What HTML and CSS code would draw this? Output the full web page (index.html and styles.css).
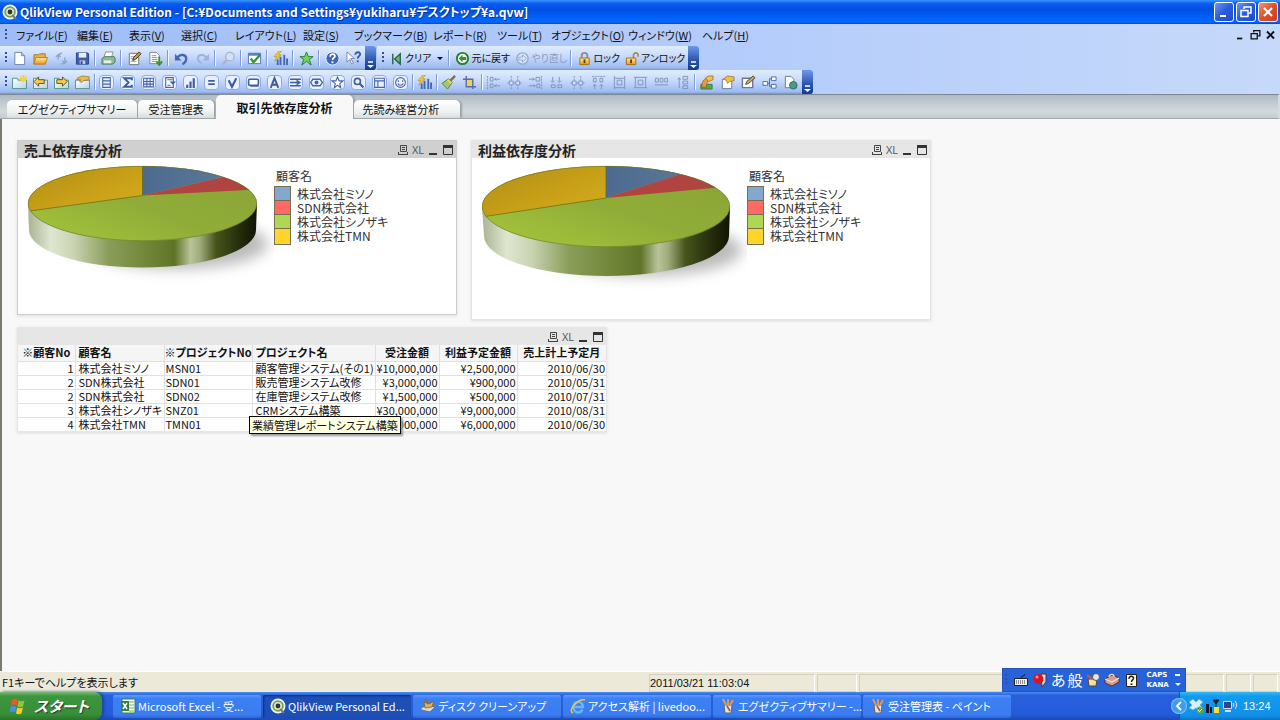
FILE: index.html
```
<!DOCTYPE html>
<html lang="ja">
<head>
  <meta charset="UTF-8">
  <title>QlikView Personal Edition</title>
  <link rel="stylesheet" href="styles.css">
</head>
<body>

<!-- icon set -->
<svg class="defs" width="0" height="0" aria-hidden="true">
  <defs>
    <linearGradient id="gFolder" x2="0" y2="1"><stop offset="0" stop-color="#ffe9a0"/><stop offset="1" stop-color="#e89a1c"/></linearGradient>
    <linearGradient id="gSheet" x2="1" y2="1"><stop offset="0" stop-color="#fff"/><stop offset="1" stop-color="#b5d3e6"/></linearGradient>
    <linearGradient id="gYellow" x2="1" y2="1"><stop offset="0" stop-color="#a88714"/><stop offset=".6" stop-color="#c8a018"/><stop offset="1" stop-color="#d8ae1c"/></linearGradient>
    <linearGradient id="gGreen" x1="0" y1="1" x2="1" y2="0"><stop offset="0" stop-color="#aace3c"/><stop offset=".5" stop-color="#90ac38"/><stop offset="1" stop-color="#88a234"/></linearGradient>
    <linearGradient id="gBlue" x2="1"><stop offset="0" stop-color="#4d6b90"/><stop offset="1" stop-color="#607c9c"/></linearGradient>
    <linearGradient id="gSide">
      <stop offset="0" stop-color="#a9b391"/><stop offset=".1" stop-color="#dfe6d0"/><stop offset=".2" stop-color="#c9d3b2"/>
      <stop offset=".35" stop-color="#8a9e5a"/><stop offset=".5" stop-color="#74893c"/><stop offset=".64" stop-color="#5f7428"/>
      <stop offset=".71" stop-color="#b9c49a"/><stop offset=".75" stop-color="#a0ac7c"/><stop offset=".82" stop-color="#47551c"/><stop offset=".92" stop-color="#262f0b"/><stop offset="1" stop-color="#101403"/>
    </linearGradient>
    <filter id="soft" x="-30%" y="-50%" width="160%" height="200%"><feGaussianBlur stdDeviation="7"/></filter>
  </defs>
  <symbol id="qlik" viewBox="0 0 16 16"><circle cx="8" cy="8" r="7.5" fill="#f4f6ee"/><circle cx="8" cy="8" r="5.8" fill="#72a153"/><circle cx="8" cy="8" r="4" fill="#dbe8ce"/><circle cx="8" cy="8" r="2.4" fill="#333"/><path d="M10 11l4 4" stroke="#777" stroke-width="2"/></symbol>
  <symbol id="new" viewBox="0 0 16 16"><path d="M3 1.500h7l3.500 3.500v9.500H3z" fill="#fff" stroke="#6a83ad"/><path d="M10 1.500V5h3.500" fill="#c5d6ef" stroke="#6a83ad"/></symbol>
  <symbol id="open" viewBox="0 0 16 16"><path d="M1 14V4h5l1-1h6v4" fill="#e9b44c" stroke="#a8762a"/><path d="M3 7h12.500l-2.500 7H1z" fill="url(#gFolder)" stroke="#b27e20"/></symbol>
  <symbol id="reload" viewBox="0 0 16 16"><path d="M4.500 9V4M2 6.500L4.500 4 7 6.500M11.500 7v6M9 10.500l2.500 2.500 2.500-2.500M4.500 4l4-2M11.500 13l-4 1" fill="none" stroke="#8ea5cc" stroke-width="1.500"/></symbol>
  <symbol id="save" viewBox="0 0 16 16"><path d="M1.500 2h12l1 1v11h-13z" fill="#3f5fae" stroke="#28427f"/><path d="M4 2h8v5H4z" fill="#e8eefa"/><path d="M5 10h6v4H5z" fill="#bfcbe6"/><path d="M6 11h2v3H6z" fill="#28427f"/></symbol>
  <symbol id="print" viewBox="0 0 16 16"><path d="M5 1h8l-2 6H3z" fill="#fff" stroke="#7b9a8b"/><path d="M1 8l3-2h10l1 2v4l-3 2H1z" fill="#8fb89a" stroke="#4e7a66"/><path d="M3 10h8v3H3z" fill="#e5f1e5"/></symbol>
  <symbol id="edit" viewBox="0 0 16 16"><path d="M2.500 2.500h10v12h-10z" fill="#fff" stroke="#6d7481"/><path d="M4 6h5M4 8h6M4 11h6" stroke="#8b99b5"/><path d="M6 10l1-3 6-6 2 2-6 6z" fill="#d79c3c" stroke="#453014"/></symbol>
  <symbol id="script" viewBox="0 0 16 16"><path d="M2 1.500h7l3 3v9H2z" fill="#fff" stroke="#718197"/><path d="M4 5h5M4 7h6M4 9h6M4 11h5" stroke="#7d9a76"/><path d="M12 6v8m-3-3l3 4 3-4" fill="none" stroke="#3d9131" stroke-width="2"/></symbol>
  <symbol id="undo" viewBox="0 0 16 16"><path d="M3 8c4-6 10-4 10 0 0 3-2 5-4 6" fill="none" stroke="#4468b7" stroke-width="2.500"/><path d="M1 3v7h7z" fill="#4468b7"/></symbol>
  <symbol id="redo" viewBox="0 0 16 16"><path d="M13 8C9 2 3 4 3 8c0 3 2 4 4 5" fill="none" stroke="#9db2dc" stroke-width="2"/><path d="M15 3v7H8z" fill="#9db2dc"/></symbol>
  <symbol id="find" viewBox="0 0 16 16"><circle cx="9.500" cy="6" r="4.500" fill="#d5e2f6" stroke="#a6b5cf" stroke-width="1.500"/><path d="M6 9.500l-4 5" stroke="#aab4c9" stroke-width="2.500"/></symbol>
  <symbol id="check" viewBox="0 0 16 16"><path d="M1.500 2.500h13v11h-13z" fill="#fff" stroke="#5270ad"/><path d="M1.500 2h13v3h-13z" fill="#5b7ec4"/><path d="M4 8l3 4 7-8" fill="none" stroke="#2f9a2b" stroke-width="2.500"/></symbol>
  <symbol id="wizard" viewBox="0 0 16 16"><path d="M7 6h2v9H7zM11 4h2v11h-2zM4 9h2v6H4zM14 8h2v7h-2z" fill="#4668b4"/><path d="M6 0L1 6h3l-2 5 7-7H6l3-4z" fill="#f2c833" stroke="#9a7a22" stroke-width=".5"/></symbol>
  <symbol id="star" viewBox="0 0 16 16"><path d="M8 1l2 5h5l-4 3 2 6-5-4-5 4 2-6-4-3h5z" fill="#6cd65c" stroke="#2a7d2f"/></symbol>
  <symbol id="help" viewBox="0 0 16 16"><circle cx="8" cy="8" r="7" fill="#3e66bb" stroke="#eef3ff"/><path d="M5.500 6c0-4 6-3 5 0-.5 1.500-2.500 1.500-2.500 3.500" fill="none" stroke="#fff" stroke-width="1.800"/><path d="M7 11h2v2H7z" fill="#fff"/></symbol>
  <symbol id="what" viewBox="0 0 16 16"><path d="M1 1l8 7H5l3 5-2 1-2-5-3 3z" fill="#fff" stroke="#798aa8"/><path d="M10 4c0-4 6-3 5 0-.5 1.500-2.500 2-2.500 4" fill="none" stroke="#3459a8" stroke-width="2"/><path d="M11.500 10h2v2h-2z" fill="#3459a8"/></symbol>
  <symbol id="clear" viewBox="0 0 16 16"><path d="M4 3v11M12 3v11L6 8.500z" fill="#76b77c" stroke="#27644a" stroke-width="1.500"/></symbol>
  <symbol id="back" viewBox="0 0 16 16"><circle cx="8" cy="8" r="6" fill="#f5fff2" stroke="#287f34" stroke-width="2"/><path d="M12 6.500H8V4L4 8l4 4V9.500h4z" fill="#2c923b"/></symbol>
  <symbol id="forward" viewBox="0 0 16 16"><circle cx="8" cy="8" r="6" fill="#d9e6fa" stroke="#94abce" stroke-width="1.500"/><path d="M4 6.500h4V4l4 4-4 4V9.500H4z" fill="#d9e6fa" stroke="#94abce"/></symbol>
  <symbol id="lock" viewBox="0 0 16 16"><path d="M5 8V5c0-4 6-4 6 0v3" fill="none" stroke="#8d8f96" stroke-width="2"/><path d="M3 7.500h10v7H3z" fill="url(#gFolder)" stroke="#a66d14"/><path d="M7 9h2v4H7z" fill="#5e4312"/></symbol>
  <symbol id="unlock" viewBox="0 0 16 16"><path d="M9 8V5c0-4 5-4 5 0v1" fill="none" stroke="#a98a54" stroke-width="1.800"/><path d="M1.500 7.500h10v7h-10z" fill="url(#gFolder)" stroke="#a66d14"/><path d="M5.500 9h2v4h-2z" fill="#5e4312"/></symbol>
  <symbol id="tabnew" viewBox="0 0 16 16"><path d="M.5 3.500h5l1 2h9v9H.5z" fill="url(#gSheet)" stroke="#4f9185"/><path d="M12 0v8M8 4h8M9 1l6 6M15 1L9 7" stroke="#f2d346" stroke-width="1.500"/></symbol>
  <symbol id="tableft" viewBox="0 0 16 16"><path d="M.5 3.500h5l1 2h9v9H.5z" fill="url(#gSheet)" stroke="#4f9185"/><path d="M1 7l5-5v3h6v4H6v3z" fill="#f7cc48" stroke="#684d18"/></symbol>
  <symbol id="tabright" viewBox="0 0 16 16"><path d="M.5 3.500h5l1 2h9v9H.5z" fill="url(#gSheet)" stroke="#4f9185"/><path d="M14 7L9 2v3H3v4h6v3z" fill="#f7cc48" stroke="#684d18"/></symbol>
  <symbol id="tabprop" viewBox="0 0 16 16"><path d="M.5 5.500h15v9H.5z" fill="url(#gSheet)" stroke="#4f9185"/><path d="M3 3l5-2 7 1v3l-6 1-2 2-2-1 1-2H2z" fill="#efbd45" stroke="#8a6628" stroke-width=".7"/></symbol>
  <!-- sheet object glyphs, drawn inside a rounded frame -->
  <symbol id="olist" viewBox="2 2 12 12"><path d="M4.500 3.500h7v9h-7zM4.500 6.500h7M4.500 9.500h7" fill="none" stroke="#4664ad"/></symbol>
  <symbol id="osum" viewBox="2 2 12 12"><path d="M12 6V4H5l4 4-4 4h7v-2" fill="none" stroke="#3f5ca6" stroke-width="1.800"/></symbol>
  <symbol id="ogrid" viewBox="2 2 12 12"><path d="M3.500 4h9v8h-9zM3.500 7h9M3.500 9.500h9M6.500 4v8M9.500 4v8" fill="none" stroke="#4664ad"/></symbol>
  <symbol id="omulti" viewBox="2 2 12 12"><path d="M4.500 3.500h7v9h-7z" fill="#fff" stroke="#4664ad"/><path d="M6 5.500h5M6 10.500h3" stroke="#4664ad"/><path d="M8 7h6l-3 3z" fill="#3f5ca6"/></symbol>
  <symbol id="obar" viewBox="2 2 12 12"><path d="M4 10h2v3H4zM7 7h2v6H7zM10 4h2v9h-2z" fill="#3f5ca6"/></symbol>
  <symbol id="oinput" viewBox="2 2 12 12"><path d="M5 6.500h6M5 9.500h6" stroke="#3f5ca6" stroke-width="1.500"/></symbol>
  <symbol id="ocheck" viewBox="2 2 12 12"><path d="M4.500 6l3 6 4-8" fill="none" stroke="#3f5ca6" stroke-width="2"/></symbol>
  <symbol id="obtn" viewBox="2 2 12 12"><rect x="3.500" y="5" width="9" height="5.500" rx="1" fill="#fff" stroke="#3f5ca6" stroke-width="1.500"/><path d="M5 11.500h8" stroke="#3f5ca6"/></symbol>
  <symbol id="otext" viewBox="2 2 12 12"><path d="M4.500 13L8 4l3.500 9M5.500 10h5" fill="none" stroke="#3f5ca6" stroke-width="1.800"/></symbol>
  <symbol id="oline" viewBox="2 2 12 12"><path d="M3 5h10M3 8h8M3 11h10M9 6l3 2-3 2" fill="none" stroke="#3f5ca6" stroke-width="1.300"/></symbol>
  <symbol id="oslide" viewBox="2 2 12 12"><path d="M5 4.500L2.500 8 5 11.500M11 4.500L13.500 8 11 11.500M5 5h6M5 11h6" fill="none" stroke="#4664ad" stroke-width="1.200"/><circle cx="8" cy="8" r="1.800" fill="#4664ad"/></symbol>
  <symbol id="ostar" viewBox="2 2 12 12"><path d="M8 3l1.500 3.500H13l-3 2.500 1 4-3-2.500L5 13l1-4-3-2.500h3.500z" fill="#fff" stroke="#4664ad"/></symbol>
  <symbol id="osearch" viewBox="2 2 12 12"><circle cx="7" cy="7" r="2.800" fill="none" stroke="#3f5ca6" stroke-width="1.500"/><path d="M9 9l3.500 3.500" stroke="#3f5ca6" stroke-width="2"/></symbol>
  <symbol id="obox" viewBox="2 2 12 12"><path d="M3.500 4h9v8.500h-9zM3.500 6.500h9M6.500 6.500V12" fill="none" stroke="#4664ad"/></symbol>
  <symbol id="osmile" viewBox="2 2 12 12"><circle cx="8" cy="8" r="4.500" fill="none" stroke="#4664ad"/><path d="M6 6v1.500M10 6v1.500M5.500 9c1 2 4 2 5 0" fill="none" stroke="#4664ad"/></symbol>
  <symbol id="brush" viewBox="0 0 16 16"><path d="M15 1l-5 5" stroke="#8b6b3c" stroke-width="2.500"/><path d="M8 4l4 4-5 7-6-6z" fill="#a2c86a" stroke="#55803a"/><path d="M7 5l4 4" stroke="#f0d267" stroke-width="2"/></symbol>
  <symbol id="snap" viewBox="0 0 16 16"><path d="M5 5h6v6H5z" fill="#f2d058"/><path d="M4.500 1v11.500H15M1 4.500h10.500V15" fill="none" stroke="#566fa8" stroke-width="1.500"/></symbol>
  <symbol id="al1" viewBox="0 0 16 16"><path d="M1.500 1v14" stroke="#7f92bb" stroke-dasharray="2 1"/><path d="M4.500 2.500h3v4h-3zM4.500 9.500h3v4h-3zM9 4.500h6M9 11.500h6M11 3L9.500 4.500 11 6M11 10l-1.500 1.500L11 13" fill="none" stroke="#7f92bb"/></symbol>
  <symbol id="al2" viewBox="0 0 16 16"><path d="M4.500 1v14M11.500 1v14" stroke="#7f92bb" stroke-dasharray="2 1"/><path d="M2.500 6.500h4v4h-4zM9.500 6.500h4v4h-4z" fill="#d6e3fb" stroke="#7f92bb"/><path d="M.5 8.500h2M13.500 8.500h2M6.500 8.500h3" stroke="#7f92bb"/></symbol>
  <symbol id="al3" viewBox="0 0 16 16"><path d="M14.500 1v14" stroke="#7f92bb" stroke-dasharray="2 1"/><path d="M8.500 2.500h4v4h-4zM9.500 9.500h3v4h-3zM1 4.500h6M1 11.500h7M5 3l1.500 1.500L5 6M6 10l1.500 1.500L6 13" fill="none" stroke="#7f92bb"/></symbol>
  <symbol id="al4" viewBox="0 0 16 16"><path d="M4 2v5M11 2v5M2 6l2 2 2-2M9 6l2 2 2-2M2.500 10.500h4v3h-4zM9.500 10.500h4v3h-4z" fill="none" stroke="#7f92bb"/></symbol>
  <symbol id="al5" viewBox="0 0 16 16"><path d="M1 1.500h14" stroke="#7f92bb" stroke-dasharray="2 1"/><path d="M2.500 3.500h3v4h-3zM9.500 3.500h3v4h-3zM4 10v5M11 10v5M2 12l2-2 2 2M9 12l2-2 2 2" fill="none" stroke="#7f92bb"/></symbol>
  <symbol id="al6" viewBox="0 0 16 16"><path d="M5.500 5.500h5v5h-5zM2.500 1v14M13.500 1v14M3 3.500h10M3 13.500h10" fill="none" stroke="#7f92bb"/></symbol>
  <symbol id="al7" viewBox="0 0 16 16"><path d="M5.500 5.500h5v5h-5zM1 2.500h14M1 13.500h14M2.500 3v10M13.500 3v10" fill="none" stroke="#7f92bb"/></symbol>
  <symbol id="al8" viewBox="0 0 16 16"><path d="M1.500 3.500h3v4h-3zM6.500 3.500h3v4h-3zM11.500 3.500h3v4h-3zM1 10.500h14" fill="none" stroke="#7f92bb"/></symbol>
  <symbol id="al9" viewBox="0 0 16 16"><path d="M8.500 1.500h5v3h-5zM8.500 6.500h5v3h-5zM8.500 11.500h5v3h-5zM4.500 3v11M3 5l1.500-2L6 5" fill="none" stroke="#7f92bb"/></symbol>
  <symbol id="oval" viewBox="0 0 16 16"><path d="M2 10h12v5H2z" fill="#57a452" stroke="#3e7e3c"/><path d="M3 13c0-6 2-9 5-9l2 3c-2 1-2 3-2 6z" fill="#e89b3c" stroke="#8a5a22" stroke-width=".7"/><path d="M7 3l3-2h5v4l-5 2z" fill="#f4c24c" stroke="#8a6020" stroke-width=".7"/></symbol>
  <symbol id="props" viewBox="0 0 16 16"><path d="M2.500 4.500h10v10h-10z" fill="#fff" stroke="#68799d"/><path d="M4 4l4-3 7 1v4l-5 1-2 2-1-3z" fill="#efbd45" stroke="#8a6628" stroke-width=".7"/></symbol>
  <symbol id="note" viewBox="0 0 16 16"><path d="M1.500 3.500h11v10h-11z" fill="#fff" stroke="#68799d" stroke-width="1.500"/><path d="M5 10l1-3 7-6 2 2-7 6z" fill="#cfa95a" stroke="#4d4432"/></symbol>
  <symbol id="tree" viewBox="0 0 16 16"><path d="M1 7h5v4H1zM10 2h5v4h-5zM10 10h5v4h-5z" fill="#fff" stroke="#4c69ae"/><path d="M6 9h2V4h2M8 9v3h2" fill="none" stroke="#4c69ae"/></symbol>
  <symbol id="web" viewBox="0 0 16 16"><path d="M2.500 1.500h6l3 3v9h-9z" fill="#fff" stroke="#68799d"/><circle cx="11" cy="11" r="4" fill="#4a9a86" stroke="#2d6a66"/></symbol>
  <symbol id="more" viewBox="0 0 11 24"><path d="M3 16h5" stroke="#fff" stroke-width="1.500"/><path d="M2 19h7l-3.500 3z" fill="#fff"/></symbol>
  <symbol id="cprint" viewBox="0 0 12 12"><path d="M3.500 1.500h6v6h-6zM1.500 10.500h9M1.500 8v3M10.500 8v3M5 3.500h3M5 5.500h3" fill="none" stroke="#444"/></symbol>
  <symbol id="cmin" viewBox="0 0 12 12"><path d="M2 9h8v2H2z" fill="#333"/></symbol>
  <symbol id="cmax" viewBox="0 0 12 12"><path d="M1.500 2v8.500h9V2" fill="none" stroke="#333"/><path d="M1 1h10v3H1z" fill="#333"/></symbol>
  <symbol id="rest" viewBox="0 0 16 16"><path d="M6 5V3h7v6h-2M3 6.500h7v6H3z" fill="none" stroke="currentColor" stroke-width="1.500"/></symbol>
  <symbol id="close" viewBox="0 0 16 16"><path d="M4 4l8 8M12 4l-8 8" stroke="currentColor" stroke-width="2.200"/></symbol>
  <symbol id="min" viewBox="0 0 16 16"><path d="M4 11h6v2H4z" fill="currentColor"/></symbol>
  <symbol id="flag" viewBox="0 0 18 18"><path d="M3 3c2-2 4-1 5.500 0L7.500 8.500C6 7.500 4 7 2 8.500z" fill="#f0562b"/><path d="M9.500 3.500c2 1 4 1 6 0l-1.500 6c-2 1-4 1-5.500 0z" fill="#8cc63e"/><path d="M1.800 10c2-1.500 4-1 5.500 0L6 15.500C4.500 14.500 2.500 14 .5 15.500z" fill="#4a8df5"/><path d="M8.200 10.500c2 1 4 1 5.800 0l-1.500 6c-2 1-4 1-5.500 0z" fill="#fbc928"/></symbol>
  <symbol id="excel" viewBox="0 0 16 16"><path d="M2 1h13v14H2z" fill="#fff" stroke="#3c7f3e"/><path d="M9 4h5M9 7h5M9 10h5M9 13h5" stroke="#6fa969"/><path d="M1 3h8v10H1z" fill="#2f8338"/><path d="M3 5l4 6M7 5l-4 6" stroke="#fff" stroke-width="1.500"/></symbol>
  <symbol id="disk" viewBox="0 0 16 16"><path d="M1 10l6-3 8 2-5 5-9-2z" fill="#d5d8d8" stroke="#72706c"/><path d="M4 4l5 2 5-3-2 6-7 1z" fill="#dfae56" stroke="#815a20" stroke-width=".7"/><path d="M8 5L5 1" stroke="#a6642b" stroke-width="2"/></symbol>
  <symbol id="ie" viewBox="0 0 16 16"><path d="M12.500 11.500c-3 5-9 3-9-2.500 0-7 9.500-6.500 9.500 0H4" fill="none" stroke="#67b8f8" stroke-width="2.500"/><path d="M3 15C-3 13 8 0 15 2" fill="none" stroke="#f2c83e" stroke-width="1.500"/></symbol>
  <symbol id="paint" viewBox="0 0 16 16"><path d="M4 7h8l-1 8H5z" fill="#dfe5e8" stroke="#66676a"/><path d="M6 7L3 1M8 7V1M10 7l3-5" stroke="#dc9a5a" stroke-width="2"/><path d="M7 8l3 5" stroke="#b94a2c" stroke-width="1.500"/></symbol>
  <symbol id="kbd" viewBox="0 0 16 16"><path d="M1.500 6.500h13v7h-13z" fill="#eee" stroke="#222"/><path d="M3 9h10M3 11h10" stroke="#333" stroke-dasharray="1 1"/><path d="M8 6c0-3 4-1 4-4" fill="none" stroke="#222"/></symbol>
  <symbol id="ball" viewBox="0 0 16 16"><path d="M9 2h5v8l-4 5z" fill="#ddd" stroke="#433"/><circle cx="6.500" cy="7" r="5" fill="#d71425"/><circle cx="5" cy="5" r="1.500" fill="#ff8d8d"/></symbol>
  <symbol id="pad" viewBox="0 0 16 16"><path d="M3 7h9l-1 7H4z" fill="#f0dfa8" stroke="#5d4720"/><circle cx="11" cy="5" r="3.500" fill="#dde9ee" stroke="#555"/><path d="M2 3l5 4" stroke="#cc5b36" stroke-width="2"/></symbol>
  <symbol id="tool" viewBox="0 0 16 16"><path d="M1 7l7-4 7 3v4l-7 4-7-3z" fill="#d39c8b" stroke="#5a3028"/><path d="M1 7l7 3 7-4M5 5c0-4 6-3 5 0" fill="none" stroke="#f5ded5" stroke-width="1.300"/></symbol>
  <symbol id="ihelp" viewBox="0 0 16 16"><path d="M3.500 2.500h10v12h-10z" fill="#fff8dc" stroke="#222"/><path d="M6 7c0-4 5-3 4.500-.5C10 8 8.500 8 8.500 10" fill="none" stroke="#222" stroke-width="1.500"/><path d="M7.500 11.500h2v1.500h-2z" fill="#222"/></symbol>
  <symbol id="box" viewBox="0 0 16 16"><path d="M1 4l4-3 3 3 3-3 4 3-3 3 3 3-4 2-3-2-3 2-4-2 3-3z" fill="#d8effc" stroke="#5aaad6" stroke-width=".7"/><circle cx="12" cy="12" r="3.500" fill="#55b431"/><path d="M10 12l1.500 1.500L14 11" fill="none" stroke="#fff"/></symbol>
  <symbol id="signal" viewBox="0 0 16 16"><path d="M1 6h3v9H1zM5 9h2v6H5z" fill="#111a33"/><path d="M8 2h6l-3 4zM11 5v4" fill="#222" stroke="#222"/><path d="M9 9h5v6H9z" fill="#f3df38"/></symbol>
  <symbol id="net" viewBox="0 0 16 16"><path d="M1.500 3.500h8v7h-8z" fill="#2c4887" stroke="#cddcf4"/><path d="M3 13h6" stroke="#cddcf4" stroke-width="2"/><path d="M11 5c1 1 1 3 0 4M13 3c2 2 2 6 0 8" fill="none" stroke="#dff0ff"/></symbol>
</svg>

<header class="titlebar">
  <svg class="icon"><use href="#qlik"/></svg>
  <h1>QlikView Personal Edition - [C:¥Documents and Settings¥yukiharu¥デスクトップ¥a.qvw]</h1>
  <div class="winbtns">
    <button aria-label="最小化"><svg><use href="#min"/></svg></button>
    <button aria-label="元のサイズに戻す"><svg><use href="#rest"/></svg></button>
    <button class="x" aria-label="閉じる"><svg><use href="#close"/></svg></button>
  </div>
</header>

<div class="bars">
  <nav class="menubar">
    <span class="grip"></span>
    <div class="menus">
      <button>ファイル(<u>F</u>)</button>
      <button>編集(<u>E</u>)</button>
      <button>表示(<u>V</u>)</button>
      <button>選択(<u>C</u>)</button>
      <button>レイアウト(<u>L</u>)</button>
      <button>設定(<u>S</u>)</button>
      <button>ブックマーク(<u>B</u>)</button>
      <button>レポート(<u>R</u>)</button>
      <button>ツール(<u>T</u>)</button>
      <button>オブジェクト(<u>O</u>)</button>
      <button>ウィンドウ(<u>W</u>)</button>
      <button>ヘルプ(<u>H</u>)</button>
    </div>
    <div class="docbtns">
      <button aria-label="最小化"><svg><use href="#min"/></svg></button>
      <button aria-label="元に戻す"><svg><use href="#rest"/></svg></button>
      <button aria-label="閉じる"><svg><use href="#close"/></svg></button>
    </div>
  </nav>

  <div class="row">
    <div class="toolbar">
      <span class="grip"></span>
      <button aria-label="新規"><svg><use href="#new"/></svg></button>
      <button aria-label="開く"><svg><use href="#open"/></svg></button>
      <button aria-label="更新"><svg><use href="#reload"/></svg></button>
      <button aria-label="保存"><svg><use href="#save"/></svg></button>
      <i class="sep"></i>
      <button aria-label="印刷"><svg><use href="#print"/></svg></button>
      <i class="sep"></i>
      <button aria-label="スクリプト編集"><svg><use href="#edit"/></svg></button>
      <button aria-label="リロード"><svg><use href="#script"/></svg></button>
      <i class="sep"></i>
      <button aria-label="元に戻す"><svg><use href="#undo"/></svg></button>
      <button aria-label="やり直し"><svg><use href="#redo"/></svg></button>
      <i class="sep"></i>
      <button aria-label="検索"><svg><use href="#find"/></svg></button>
      <i class="sep"></i>
      <button aria-label="現在の選択"><svg><use href="#check"/></svg></button>
      <i class="sep"></i>
      <button aria-label="クイックチャート"><svg><use href="#wizard"/></svg></button>
      <i class="sep"></i>
      <button aria-label="ブックマーク"><svg><use href="#star"/></svg></button>
      <i class="sep"></i>
      <button aria-label="ヘルプ"><svg><use href="#help"/></svg></button>
      <button aria-label="ポップヒント"><svg><use href="#what"/></svg></button>
      <svg class="more"><use href="#more"/></svg>
    </div>
    <div class="toolbar">
      <span class="grip"></span>
      <button class="txt"><svg><use href="#clear"/></svg>クリア<span class="arrow"></span></button>
      <i class="sep"></i>
      <button class="txt"><svg><use href="#back"/></svg>元に戻す</button>
      <button class="txt off"><svg><use href="#forward"/></svg>やり直し</button>
      <i class="sep"></i>
      <button class="txt"><svg><use href="#lock"/></svg>ロック</button>
      <button class="txt"><svg><use href="#unlock"/></svg>アンロック</button>
      <svg class="more"><use href="#more"/></svg>
    </div>
  </div>

  <div class="row">
    <div class="toolbar design">
      <span class="grip"></span>
      <button aria-label="シート追加"><svg><use href="#tabnew"/></svg></button>
      <button aria-label="左へ"><svg><use href="#tableft"/></svg></button>
      <button aria-label="右へ"><svg><use href="#tabright"/></svg></button>
      <button aria-label="シートプロパティ"><svg><use href="#tabprop"/></svg></button>
      <i class="sep"></i>
      <button class="obj" aria-label="リストボックス"><svg><use href="#olist"/></svg></button>
      <button class="obj" aria-label="統計ボックス"><svg><use href="#osum"/></svg></button>
      <button class="obj" aria-label="テーブルボックス"><svg><use href="#ogrid"/></svg></button>
      <button class="obj" aria-label="マルチボックス"><svg><use href="#omulti"/></svg></button>
      <button class="obj" aria-label="チャート"><svg><use href="#obar"/></svg></button>
      <button class="obj" aria-label="入力ボックス"><svg><use href="#oinput"/></svg></button>
      <button class="obj" aria-label="選択ボックス"><svg><use href="#ocheck"/></svg></button>
      <button class="obj" aria-label="ボタン"><svg><use href="#obtn"/></svg></button>
      <button class="obj" aria-label="テキスト"><svg><use href="#otext"/></svg></button>
      <button class="obj" aria-label="線と矢印"><svg><use href="#oline"/></svg></button>
      <button class="obj" aria-label="スライダー"><svg><use href="#oslide"/></svg></button>
      <button class="obj" aria-label="ブックマーク"><svg><use href="#ostar"/></svg></button>
      <button class="obj" aria-label="検索"><svg><use href="#osearch"/></svg></button>
      <button class="obj" aria-label="コンテナ"><svg><use href="#obox"/></svg></button>
      <button class="obj" aria-label="カスタム"><svg><use href="#osmile"/></svg></button>
      <i class="sep"></i>
      <button aria-label="ウィザード"><svg><use href="#wizard"/></svg></button>
      <i class="sep"></i>
      <button aria-label="書式"><svg><use href="#brush"/></svg></button>
      <button aria-label="グリッド"><svg><use href="#snap"/></svg></button>
      <i class="sep"></i>
      <button aria-label="左揃え"><svg><use href="#al1"/></svg></button>
      <button aria-label="左右中央"><svg><use href="#al2"/></svg></button>
      <button aria-label="右揃え"><svg><use href="#al3"/></svg></button>
      <button aria-label="下揃え"><svg><use href="#al4"/></svg></button>
      <button aria-label="上下中央"><svg><use href="#al2"/></svg></button>
      <button aria-label="上揃え"><svg><use href="#al5"/></svg></button>
      <button aria-label="左右均等"><svg><use href="#al6"/></svg></button>
      <button aria-label="上下均等"><svg><use href="#al7"/></svg></button>
      <button aria-label="左調整"><svg><use href="#al8"/></svg></button>
      <button aria-label="上調整"><svg><use href="#al9"/></svg></button>
      <i class="sep"></i>
      <button aria-label="ユーザー設定"><svg><use href="#oval"/></svg></button>
      <button aria-label="ドキュメント設定"><svg><use href="#props"/></svg></button>
      <button aria-label="変数"><svg><use href="#note"/></svg></button>
      <button aria-label="テーブルビューア"><svg><use href="#tree"/></svg></button>
      <button aria-label="Webビュー"><svg><use href="#web"/></svg></button>
      <svg class="more"><use href="#more"/></svg>
    </div>
  </div>
</div>

<nav class="tabs">
  <button class="tab t1">エグゼクティブサマリー</button>
  <button class="tab t2">受注管理表</button>
  <button class="tab t3 active">取引先依存度分析</button>
  <button class="tab t4">先読み経営分析</button>
</nav>

<main class="sheet">
  <div class="charts">
    <section class="panel sales">
      <div class="caption">
        <h2>売上依存度分析</h2>
        <button aria-label="印刷"><svg><use href="#cprint"/></svg></button>
        <button class="xl">XL</button>
        <button aria-label="最小化"><svg><use href="#cmin"/></svg></button>
        <button aria-label="最大化"><svg><use href="#cmax"/></svg></button>
      </div>
      <div class="chart">
        <svg class="pie" viewBox="0 0 256 140" width="256" height="140" role="img" aria-label="売上依存度分析">
          <clipPath id="c1"><ellipse cx="124.500" cy="45.500" rx="114.500" ry="37.500"/></clipPath>
          <ellipse cx="158" cy="86" rx="92" ry="25" fill="#777" opacity=".5" filter="url(#soft)"/>
          <path d="M10 45.500L11 72A113.500 37.500 0 0 0 238 72L239 45.500z" fill="url(#gSide)"/>
          <g clip-path="url(#c1)">
            <path d="M0 0h256v100H0z" fill="url(#gGreen)"/>
            <path d="M124.500 37.500V0H-10V56z" fill="url(#gYellow)"/>
            <path d="M124.500 37.500V0H240L202 20z" fill="url(#gBlue)"/>
            <path d="M124.500 37.500L202 20l40-14 20 24-33 2z" fill="#b04440"/>
            <path d="M124.500 37.500V0M124.500 37.500L-10 56" stroke="#6e6412" stroke-width=".7"/>
          </g>
          <ellipse cx="124.500" cy="45.500" rx="114.200" ry="37.200" fill="none" stroke="#69752a" stroke-width=".6"/>
        </svg>
        <div class="legend">
          <h3>顧客名</h3>
          <ul>
            <li class="blue">株式会社ミソノ</li>
            <li class="red">SDN株式会社</li>
            <li class="green">株式会社シノザキ</li>
            <li class="yellow">株式会社TMN</li>
          </ul>
        </div>
      </div>
    </section>

    <section class="panel profit">
      <div class="caption">
        <h2>利益依存度分析</h2>
        <button aria-label="印刷"><svg><use href="#cprint"/></svg></button>
        <button class="xl">XL</button>
        <button aria-label="最小化"><svg><use href="#cmin"/></svg></button>
        <button aria-label="最大化"><svg><use href="#cmax"/></svg></button>
      </div>
      <div class="chart">
        <svg class="pie" viewBox="0 0 275 150" width="275" height="150" role="img" aria-label="利益依存度分析">
          <clipPath id="c2"><ellipse cx="134" cy="48.500" rx="124" ry="40.500"/></clipPath>
          <ellipse cx="172" cy="92" rx="98" ry="26" fill="#777" opacity=".5" filter="url(#soft)"/>
          <path d="M10 48.500L12 78A122.500 40 0 0 0 257 78L258 48.500z" fill="url(#gSide)"/>
          <g clip-path="url(#c2)">
            <path d="M0 0h280v100H0z" fill="url(#gGreen)"/>
            <path d="M134 40V0H-10V62z" fill="url(#gYellow)"/>
            <path d="M134 40V0H250L206 17z" fill="url(#gBlue)"/>
            <path d="M134 40L206 17l40-16 20 24-25 5z" fill="#b04440"/>
            <path d="M134 40V0M134 40L-10 62" stroke="#6e6412" stroke-width=".7"/>
          </g>
          <ellipse cx="134" cy="48.500" rx="123.700" ry="40.200" fill="none" stroke="#69752a" stroke-width=".6"/>
        </svg>
        <div class="legend">
          <h3>顧客名</h3>
          <ul>
            <li class="blue">株式会社ミソノ</li>
            <li class="red">SDN株式会社</li>
            <li class="green">株式会社シノザキ</li>
            <li class="yellow">株式会社TMN</li>
          </ul>
        </div>
      </div>
    </section>
  </div>

  <section class="panel list">
    <div class="caption">
      <button aria-label="印刷"><svg><use href="#cprint"/></svg></button>
      <button class="xl">XL</button>
      <button aria-label="最小化"><svg><use href="#cmin"/></svg></button>
      <button aria-label="最大化"><svg><use href="#cmax"/></svg></button>
    </div>
    <table>
      <colgroup><col class="w1"><col class="w2"><col class="w3"><col class="w4"><col class="w5"><col class="w6"><col class="w7"></colgroup>
      <thead>
        <tr><th>※顧客No</th><th>顧客名</th><th>※プロジェクトNo</th><th>プロジェクト名</th><th>受注金額</th><th>利益予定金額</th><th>売上計上予定月</th></tr>
      </thead>
      <tbody>
        <tr><td>1</td><td>株式会社ミソノ</td><td>MSN01</td><td>顧客管理システム(その1)</td><td>¥10,000,000</td><td>¥2,500,000</td><td>2010/06/30</td></tr>
        <tr><td>2</td><td>SDN株式会社</td><td>SDN01</td><td>販売管理システム改修</td><td>¥3,000,000</td><td>¥900,000</td><td>2010/05/31</td></tr>
        <tr><td>2</td><td>SDN株式会社</td><td>SDN02</td><td>在庫管理システム改修</td><td>¥1,500,000</td><td>¥500,000</td><td>2010/07/31</td></tr>
        <tr><td>3</td><td>株式会社シノザキ</td><td>SNZ01</td><td>CRMシステム構築</td><td>¥30,000,000</td><td>¥9,000,000</td><td>2010/08/31</td></tr>
        <tr><td>4</td><td>株式会社TMN</td><td>TMN01</td><td></td><td>000,000</td><td>¥6,000,000</td><td>2010/06/30</td></tr>
      </tbody>
    </table>
    <div class="tooltip" role="tooltip">業績管理レポートシステム構築</div>
  </section>
</main>

<footer class="status">
  <span class="hint">F1キーでヘルプを表示します</span>
  <span class="cell date">2011/03/21 11:03:04</span>
  <span class="cell small"></span>
  <span class="cell wide"></span>
  <span class="cell tiny"></span>
  <span class="cell tiny"></span>
</footer>

<div class="taskbar">
  <button class="start"><svg><use href="#flag"/></svg>スタート</button>
  <div class="tasks">
    <button><svg><use href="#excel"/></svg>Microsoft Excel - 受...</button>
    <button class="on"><svg><use href="#qlik"/></svg>QlikView Personal Ed...</button>
    <button><svg><use href="#disk"/></svg>ディスク クリーンアップ</button>
    <button><svg><use href="#ie"/></svg>アクセス解析 | livedoo...</button>
    <button><svg><use href="#paint"/></svg>エグゼクティブサマリー -...</button>
    <button><svg><use href="#paint"/></svg>受注管理表 - ペイント</button>
  </div>
  <div class="tray">
    <button class="expand" aria-label="隠れているアイコン"><svg viewBox="0 0 16 16"><path d="M10 4L6 8l4 4" fill="none" stroke="#fff" stroke-width="2"/></svg></button>
    <svg><use href="#box"/></svg><svg><use href="#signal"/></svg><svg><use href="#net"/></svg>
    <time>13:24</time>
  </div>
  <div class="ime">
    <span class="grip"></span>
    <svg><use href="#kbd"/></svg><svg><use href="#ball"/></svg>
    <b>あ</b><b>般</b>
    <svg><use href="#pad"/></svg><svg><use href="#tool"/></svg><svg><use href="#ihelp"/></svg>
    <div class="caps"><span>CAPS</span><span>KANA</span></div>
    <div class="imeend"><i></i><em></em></div>
  </div>
</div>

</body>
</html>
```

FILE: styles.css
```
* { box-sizing: border-box; }
body { margin: 0; min-height: 100vh; display: flex; flex-direction: column; background: #f8f8f8; color: #111; font-family: "Noto Sans CJK JP", sans-serif; font-size: 11px; line-height: 14px; font-feature-settings: "palt"; }
button { font: inherit; font-feature-settings: inherit; color: inherit; border: 0; background: none; padding: 0; margin: 0; white-space: nowrap; }
svg { width: 16px; height: 16px; flex: none; display: block; }
h1, h2, h3, ul { margin: 0; padding: 0; }
.defs { position: absolute; width: 0; height: 0; }

/* title bar */
.titlebar { height: 24px; display: flex; align-items: center; padding: 0 2px; color: #fff; background: linear-gradient(#3a93ff, #0a5cf0 15%, #0050e0 40%, #0062fb 75%, #0667ff 92%, #0046c8); }
.titlebar h1 { flex: 1; margin-left: 2px; font-size: 12px; line-height: 18px; font-weight: 700; white-space: nowrap; text-shadow: 1px 1px 0 #0a3390; }
.winbtns { display: flex; gap: 2px; }
.winbtns button { width: 20px; height: 20px; border: 1px solid #fff; border-radius: 3px; color: #fff; background: linear-gradient(135deg, #6d95f5, #2a5ade 50%, #1e4bc8); display: flex; align-items: center; justify-content: center; }
.winbtns .x { background: linear-gradient(135deg, #f0937a, #dd5029 50%, #c93e1c); }

/* menu and tool bars */
.bars { background: linear-gradient(90deg, #9ebdf8, #b5cdfb 60%, #c6d9fa); }
.menubar { height: 22px; display: flex; align-items: center; }
.grip { width: 3px; height: 12px; margin: 0 3px 0 5px; flex: none; background: repeating-linear-gradient(#31518f 0 2px, transparent 2px 4px) left / 2px 100% no-repeat; }
.menus { flex: 1; padding-left: 5px; display: grid; grid-template-columns: 61px 52px 52px 54px 68px 51px 79px 64px 54px 77px 74px 60px; }
.menus button { text-align: left; }
.docbtns { display: flex; padding-right: 2px; }
.docbtns svg { width: 15px; height: 14px; }
.row { display: flex; height: 24px; }
.toolbar { display: flex; align-items: center; border-radius: 0 3px 3px 0; background: linear-gradient(#e0ecfe, #cbdcfb 40%, #9bbaf0 92%, #6f8fcf); padding-left: 1px; }
.toolbar + .toolbar { margin-left: 1px; }
.toolbar .grip { margin: 0 1px 0 4px; }
.toolbar button { width: 21px; height: 20px; display: flex; align-items: center; justify-content: center; }
.toolbar button svg { width: 15px; height: 15px; }
.toolbar .txt { width: auto; padding: 0 2px 0 3px; font-size: 10px; gap: 1px; }
.toolbar .off { color: #8a9cc4; }
.arrow { border: 3px solid transparent; border-top-color: #111; border-bottom: 0; margin: 0 2px 0 5px; }
.sep { width: 5px; height: 16px; flex: none; background: linear-gradient(90deg, transparent 1px, #7e9bd2 1px 2px, #f2f7ff 2px 3px, transparent 3px); }
.design .sep { width: 3px; }
.toolbar .more { width: 11px; height: 24px; margin-left: 1px; background: linear-gradient(#6d97e8, #2a55ae 60%, #123c93); border-radius: 0 3px 3px 0; }
.toolbar .obj svg { border: 1px solid #8fabdc; border-radius: 4px; background: #e9f1ff; }

/* sheet tabs */
.tabs { height: 25px; display: flex; align-items: flex-end; padding-left: 7px; border-top: 1px solid #7c8894; border-bottom: 1px solid #a2a9ac; border-right: 2px solid #d4dbe8; background: linear-gradient(#aebbc5, #d3dadd 70%, #c4cccf); }
.tab { height: 18px; line-height: 17px; padding: 0; border-radius: 5px 5px 0 0; background: linear-gradient(#fff, #f1f3f3 60%, #d7dcde); box-shadow: 2px 0 2px #9aa2a5; }
.t1 { width: 130px; }
.t2 { width: 76px; margin-left: 1px; }
.t3 { width: 137px; margin-left: 2px; }
.t4 { width: 106px; padding-right: 12px; margin-left: 1px; }
.tab.active { height: 24px; margin-bottom: -1px; font-weight: 700; font-size: 12px; background: #f8f8f8; line-height: 23px; }

/* sheet */
.sheet { flex: 1; border-left: 2px solid #7b7a70; padding: 21px 15px 0; background: #f8f8f8; }
.charts { display: flex; gap: 14px; align-items: flex-start; }
.panel { background: #fff; border: 1px solid #ddd; box-shadow: 0 1px 3px #ddd; flex: none; }
.sales { width: 440px; height: 175px; border-color: #ccc; }
.profit { width: 460px; height: 180px; border-color: #e4e4e4; }
.caption { height: 17px; display: flex; align-items: center; justify-content: flex-end; gap: 3px; padding: 0 2px 0 6px; background: #e6e6e6; }
.sales .caption { background: #d0d0d0; }
.caption h2 { flex: 1; font-size: 14px; line-height: 16px; color: #222; }
.caption svg { width: 12px; height: 12px; }
.xl { font-family: "Open Sans", sans-serif; color: #555; }
.chart { display: flex; }
.pie { width: auto; height: auto; }
.legend { padding: 11px 0 0; color: #333; font-size: 12px; line-height: 14px; }
.legend h3 { font-size: 12px; line-height: 14px; font-weight: 400; margin: 0 0 4px 2px; }
.legend ul { list-style: none; }
.legend li { height: 14px; display: flex; align-items: center; gap: 6px; }
.legend li::before { content: ""; width: 15px; height: 15px; border: 1px solid #756f4f; flex: none; }
.blue::before { background: #84a7ce; }
.red::before { background: #ff6b64; }
.green::before { background: #afd751; }
.yellow::before { background: #ffd52b; }

/* project list */
.list { position: relative; width: 590px; margin-top: 7px; border-color: #e6e6e6; }
table { width: 100%; table-layout: fixed; border-collapse: collapse; }
.w1 { width: 57px; }
.w2 { width: 89px; }
.w3 { width: 88px; }
.w4 { width: 123px; }
.w5 { width: 64px; }
.w6 { width: 78px; }
th, td { height: 14px; padding: 0 2px; border: 1px solid #e0e0e0; border-width: 0 1px 1px 0; font-size: 11px; line-height: 13px; white-space: nowrap; }
th { height: 16px; padding: 0; background: #f5f5f5; line-height: 15px; text-align: center; }
td { text-align: left; padding-left: 3px; }
th:nth-child(2), th:nth-child(4) { text-align: left; padding-left: 3px; }
td:nth-child(3) { padding-left: 1px; }
td:first-child, td:nth-child(n+5) { text-align: right; padding: 0 1px; }
tr > :last-child { border-right: 0; }
tbody tr:last-child td { border-bottom: 0; }
.tooltip { position: absolute; left: 231px; top: 88px; height: 18px; padding: 0 2px; line-height: 16px; border: 1px solid #000; background: #ffffe1; box-shadow: 2px 2px 2px #999; white-space: nowrap; }

/* status bar */
.status { height: 21px; display: flex; gap: 2px; padding: 2px 2px 0; background: #ece9d8; border-top: 1px solid #fff; }
.hint { width: 645px; line-height: 17px; }
.cell { border: 1px solid #d5d1be; border-right-color: #fff; line-height: 16px; }
.date { width: 166px; font-family: "Liberation Sans", sans-serif; }
.small { width: 40px; }
.wide { flex: 1; }
.tiny { width: 25px; }

/* taskbar */
.taskbar { position: relative; height: 28px; display: flex; color: #fff; background: linear-gradient(#4a8cf2, #2860dc 12%, #245bdb 80%, #1d49b4); }
.start { width: 102px; display: flex; align-items: center; padding-left: 9px; gap: 7px; border-radius: 0 8px 8px 0; font-size: 15px; font-weight: 700; font-style: italic; text-shadow: 1px 1px 1px #333; background: linear-gradient(#79b979, #3c963c 15%, #388f38 80%, #2a722b); box-shadow: 2px 0 3px #1b4698; }
.start svg { width: 18px; height: 18px; }
.tasks { flex: 1; display: flex; align-items: center; gap: 2px; padding-left: 11px; }
.tasks button { flex: 0 1 148px; min-width: 0; height: 23px; display: flex; align-items: center; gap: 2px; padding: 0 0 0 7px; border-radius: 2px; background: linear-gradient(#5f9bff, #3c80f5 15%, #3b7df0 85%, #2d66d4); }
.tasks .on { background: #1d4fb4; box-shadow: inset 1px 1px 2px #0c2f7c; }
.tray { width: 101px; display: flex; align-items: center; gap: 1px; background: linear-gradient(#37b9f5, #129bee 15%, #1290e8 85%, #0d72c4); border-left: 1px solid #0a57b5; }
.tray time { margin-left: 4px; font-family: "Liberation Sans", sans-serif; }
.expand { width: 16px; height: 16px; margin-left: -9px; border-radius: 8px; background: #3c9bef; box-shadow: inset 0 0 2px #fff; }
.ime { position: absolute; right: 94px; top: -24px; width: 184px; height: 24px; display: flex; align-items: center; gap: 2px; background: #2862d8; border: 1px solid #2354bf; }
.ime svg { margin-right: 1px; }
.ime b { font-weight: 400; font-size: 15px; line-height: 20px; }
.ime .grip { margin: 0 3px 0 2px; }
.caps { font: 700 7px/10px "DejaVu Sans", sans-serif; display: flex; flex-direction: column; margin-left: 5px; }
.imeend { display: flex; flex-direction: column; align-items: center; gap: 7px; margin-left: 4px; }
.imeend i { width: 5px; height: 2px; background: #fff; }
.imeend em { border: 3px solid transparent; border-top-color: #fff; border-bottom: 0; }
```
